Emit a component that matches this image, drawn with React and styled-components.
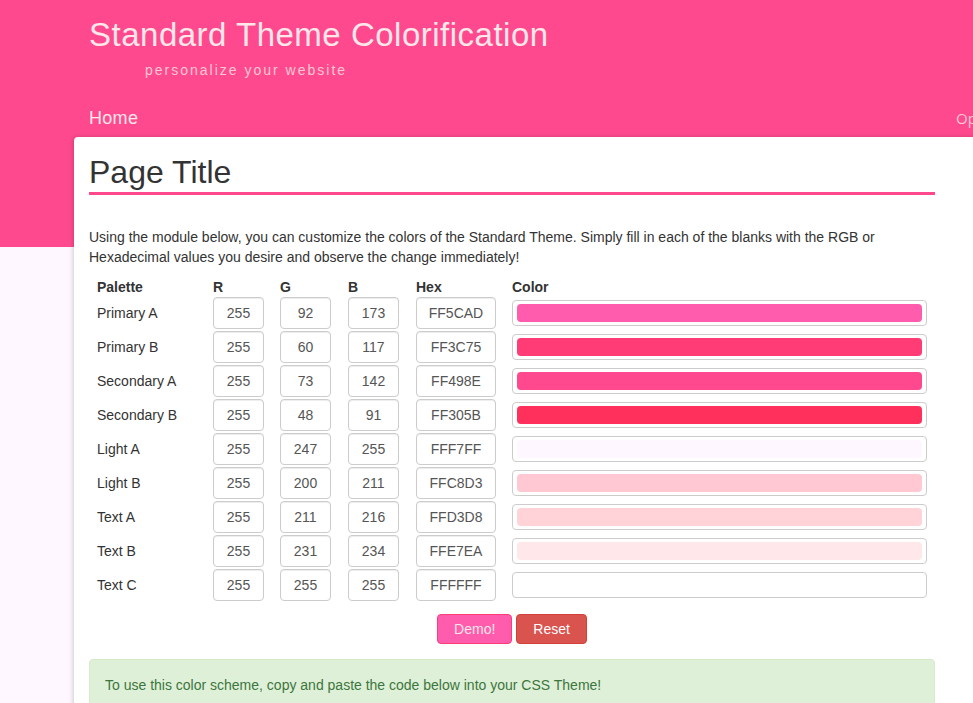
import React from "react";
import styled, { createGlobalStyle } from "styled-components";

const GlobalStyle = createGlobalStyle`
  html, body { margin: 0; padding: 0; overflow: hidden; }
  body {
    font-family: "Liberation Sans", Arial, Helvetica, sans-serif;
    font-size: 14px;
    line-height: 20px;
    color: #333;
    background: #fff7ff;
  }
  * { box-sizing: border-box; }
`;

const Page = styled.div`
  min-height: 703px;
  background: linear-gradient(#ff498e 0, #ff498e 247px, #fff7ff 247px);
  overflow: hidden;
`;

const Header = styled.header`
  padding: 17px 0 0 89px;
`;

const SiteTitle = styled.h1`
  margin: 0;
  font-size: 33px;
  line-height: 36px;
  font-weight: normal;
  color: #ffe7ea;
  letter-spacing: 0.5px;
`;

const Tagline = styled.div`
  margin: 7px 0 0 56px;
  font-size: 14px;
  line-height: 20px;
  letter-spacing: 2px;
  color: #ffc8d3;
`;

const Nav = styled.nav`
  display: grid;
  grid-template-columns: 867px max-content;
  align-items: center;
  margin-top: 26px;
  height: 24px;
  white-space: nowrap;
`;

const NavLink = styled.a`
  font-size: 18px;
  line-height: 24px;
  letter-spacing: 0.3px;
  color: #ffe7ea;
  text-decoration: none;
`;

const NavLinkAlt = styled.a`
  font-family: "Open Sans", "Liberation Sans", sans-serif;
  font-size: 15px;
  line-height: 24px;
  color: #ffc8d3;
  text-decoration: none;
`;

const Card = styled.main`
  margin: 7px 0 0 74px;
  width: 920px;
  background: #fff;
  border-radius: 4px 0 0 0;
  box-shadow: -1px 0 5px rgba(0, 0, 0, 0.18);
  padding: 17px 15px 30px 15px;
`;

const Content = styled.div`
  width: 846px;
`;

const PageTitle = styled.h2`
  margin: 0;
  padding-bottom: 2px;
  font-size: 32px;
  line-height: 36px;
  font-weight: normal;
  color: #333;
  border-bottom: 3px solid #ff498e;
`;

const Intro = styled.p`
  margin: 32px 0 10px;
  font-size: 14px;
  line-height: 20px;
  color: #333;
`;

const Grid = styled.div`
  display: grid;
  grid-template-columns: 116px 67px 68px 68px 96px 1fr;
`;

const HeadCell = styled.div`
  padding: 0 8px;
  height: 19px;
  line-height: 20px;
  font-weight: bold;
  color: #333;
`;

const Cell = styled.div`
  padding: 0 8px;
  height: 34px;
  display: flex;
  align-items: center;
`;

const Field = styled.input`
  width: ${(p) => p.$w}px;
  height: 32px;
  border: 1px solid #ccc;
  border-radius: 4px;
  box-shadow: inset 0 1px 1px rgba(0, 0, 0, 0.075);
  font-family: "Liberation Sans", Arial, sans-serif;
  font-size: 14px;
  color: #555;
  text-align: center;
  padding: 0 4px;
  background: #fff;
  outline: none;
`;

const Swatch = styled.div`
  width: 100%;
  height: 26px;
  border: 1px solid #ccc;
  border-radius: 4px;
  padding: 3px 4px;
  background: #fff;
`;

const SwatchBar = styled.div`
  height: 100%;
  border-radius: 4px;
  background: ${(p) => p.$c};
`;

const Actions = styled.div`
  display: flex;
  justify-content: center;
  gap: 4px;
  margin-top: 12px;
`;

const Button = styled.button`
  height: 30px;
  padding: 0 16px;
  font-family: "Liberation Sans", Arial, sans-serif;
  font-size: 14px;
  line-height: 20px;
  border-radius: 4px;
  border: 1px solid ${(p) => p.$border};
  background: ${(p) => p.$bg};
  color: ${(p) => p.$fg};
  cursor: pointer;
`;

const Alert = styled.div`
  margin-top: 15px;
  padding: 15px;
  background: #dff0d8;
  border: 1px solid #d6e9c6;
  border-radius: 4px;
  color: #3c763d;
  font-size: 14px;
  line-height: 20px;
  min-height: 80px;
`;

const palette = [
  ["Primary A", 255, 92, 173],
  ["Primary B", 255, 60, 117],
  ["Secondary A", 255, 73, 142],
  ["Secondary B", 255, 48, 91],
  ["Light A", 255, 247, 255],
  ["Light B", 255, 200, 211],
  ["Text A", 255, 211, 216],
  ["Text B", 255, 231, 234],
  ["Text C", 255, 255, 255],
];

const hex = (r, g, b) =>
  [r, g, b].map((v) => v.toString(16).padStart(2, "0")).join("").toUpperCase();

export default function App() {
  return (
    <>
      <GlobalStyle />
      <Page>
        <Header>
          <SiteTitle>Standard Theme Colorification</SiteTitle>
          <Tagline>personalize your website</Tagline>
          <Nav>
            <NavLink href="#">Home</NavLink>
            <NavLinkAlt href="#">Options</NavLinkAlt>
          </Nav>
        </Header>
        <Card>
          <Content>
            <PageTitle>Page Title</PageTitle>
            <Intro>
              Using the module below, you can customize the colors of the Standard Theme. Simply
              fill in each of the blanks with the RGB or Hexadecimal values you desire and observe
              the change immediately!
            </Intro>
            <Grid>
              <HeadCell>Palette</HeadCell>
              <HeadCell>R</HeadCell>
              <HeadCell>G</HeadCell>
              <HeadCell>B</HeadCell>
              <HeadCell>Hex</HeadCell>
              <HeadCell>Color</HeadCell>
              {palette.map(([name, r, g, b]) => (
                <React.Fragment key={name}>
                  <Cell>{name}</Cell>
                  <Cell>
                    <Field $w={51} defaultValue={r} />
                  </Cell>
                  <Cell>
                    <Field $w={51} defaultValue={g} />
                  </Cell>
                  <Cell>
                    <Field $w={51} defaultValue={b} />
                  </Cell>
                  <Cell>
                    <Field $w={80} defaultValue={hex(r, g, b)} />
                  </Cell>
                  <Cell>
                    <Swatch>
                      <SwatchBar $c={`#${hex(r, g, b)}`} />
                    </Swatch>
                  </Cell>
                </React.Fragment>
              ))}
            </Grid>
            <Actions>
              <Button $bg="#ff5cad" $border="#ff3c75" $fg="#ffe7ea">
                Demo!
              </Button>
              <Button $bg="#d9534f" $border="#d43f3a" $fg="#fff">
                Reset
              </Button>
            </Actions>
            <Alert>To use this color scheme, copy and paste the code below into your CSS Theme!</Alert>
          </Content>
        </Card>
      </Page>
    </>
  );
}
